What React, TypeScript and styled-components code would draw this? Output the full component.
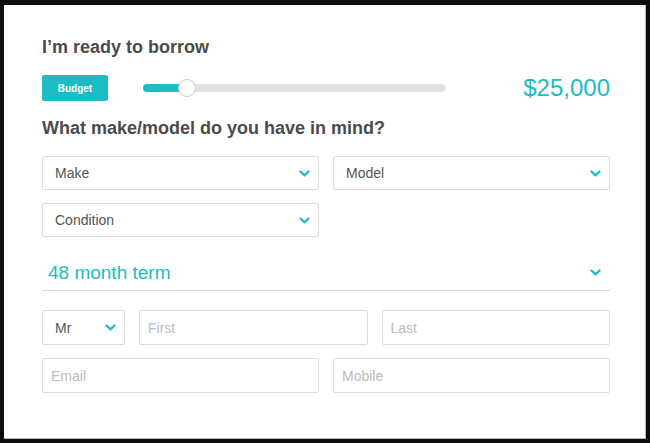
import React from "react";
import styled, { createGlobalStyle } from "styled-components";

const TEAL = "#1bbcc2";

const Global = createGlobalStyle`
  html, body { margin: 0; padding: 0; background: #0e0e0e; }
  body { font-family: "Liberation Sans", Arial, sans-serif; }
  * { box-sizing: border-box; }
`;

const Card = styled.div`
  margin: 5px 4px 4px 4px;
  height: 434px;
  background: #fff;
  border-right: 1px solid #b8b8b8;
  border-bottom: 1px solid #b8b8b8;
  padding: 31px 35px 0 38px;
  display: flex;
  flex-direction: column;
`;

const Heading = styled.h2<{ $mt?: number }>`
  margin: ${(p) => p.$mt ?? 0}px 0 0 0;
  font-size: 18px;
  line-height: 22px;
  font-weight: 700;
  color: #4b4b4b;
`;

const BudgetRow = styled.div`
  margin-top: 17px;
  display: flex;
  align-items: center;
  height: 26px;
`;

const BudgetButton = styled.button`
  width: 66px;
  height: 26px;
  border: none;
  border-radius: 2px;
  background: ${TEAL};
  color: #fff;
  font-family: "Liberation Sans", Arial, sans-serif;
  font-size: 10px;
  font-weight: 700;
  padding: 0;
`;

const Track = styled.div`
  position: relative;
  margin-left: 35px;
  width: 303px;
  height: 8px;
  border-radius: 4px;
  background: #e2e2e2;
`;

const Fill = styled.div`
  position: absolute;
  left: 0;
  top: 0;
  height: 8px;
  border-radius: 4px;
  background: ${TEAL};
`;

const Thumb = styled.div`
  position: absolute;
  top: 50%;
  width: 18px;
  height: 18px;
  margin: -9px 0 0 -9px;
  border-radius: 50%;
  background: #fff;
  border: 1px solid #c9c9c9;
`;

const Amount = styled.div`
  margin-left: auto;
  color: ${TEAL};
  font-size: 24px;
  line-height: 26px;
`;

const Row = styled.div<{ $cols: string; $mt: number; $h: number }>`
  margin-top: ${(p) => p.$mt}px;
  display: grid;
  grid-template-columns: ${(p) => p.$cols};
  column-gap: 14px;
  height: ${(p) => p.$h}px;
`;

const SelectBox = styled.div<{ $pl?: number }>`
  display: flex;
  align-items: center;
  justify-content: space-between;
  height: 100%;
  border: 1px solid #dcdcdc;
  border-radius: 2px;
  padding: 0 8px 0 ${(p) => p.$pl ?? 12}px;
  font-size: 14px;
  color: #555;
`;

const InputBox = styled.div`
  display: flex;
  align-items: center;
  height: 100%;
  border: 1px solid #dcdcdc;
  border-radius: 2px;
  padding: 0 8px;
  font-size: 14px;
  color: #bcbcbc;
`;

const TermBox = styled.div`
  margin-top: 18px;
  height: 36px;
  display: flex;
  align-items: center;
  justify-content: space-between;
  border-bottom: 1px solid #dcdcdc;
  padding: 0 9px 0 6px;
  font-size: 19px;
  color: ${TEAL};
`;

const Chevron = () => (
  <svg width="11" height="7" viewBox="0 0 11 7">
    <path
      d="M1.5 1.5 L5.5 5.3 L9.5 1.5"
      fill="none"
      stroke={TEAL}
      strokeWidth="2.3"
      strokeLinecap="round"
      strokeLinejoin="round"
    />
  </svg>
);

const Select = ({ label, pl }: { label: string; pl?: number }) => (
  <SelectBox $pl={pl}>
    <span>{label}</span>
    <Chevron />
  </SelectBox>
);

export default function App() {
  const pct = 14.5;
  return (
    <>
      <Global />
      <Card>
        <Heading>I’m ready to borrow</Heading>
        <BudgetRow>
          <BudgetButton>Budget</BudgetButton>
          <Track>
            <Fill style={{ width: `${pct}%` }} />
            <Thumb style={{ left: `${pct}%` }} />
          </Track>
          <Amount>$25,000</Amount>
        </BudgetRow>
        <Heading $mt={16}>What make/model do you have in mind?</Heading>
        <Row $cols="1fr 1fr" $mt={17} $h={34}>
          <Select label="Make" />
          <Select label="Model" />
        </Row>
        <Row $cols="1fr 1fr" $mt={13} $h={34}>
          <Select label="Condition" />
        </Row>
        <TermBox>
          <span>48 month term</span>
          <Chevron />
        </TermBox>
        <Row $cols="83px 1fr 1fr" $mt={19} $h={35}>
          <Select label="Mr" />
          <InputBox>First</InputBox>
          <InputBox>Last</InputBox>
        </Row>
        <Row $cols="1fr 1fr" $mt={13} $h={35}>
          <InputBox>Email</InputBox>
          <InputBox>Mobile</InputBox>
        </Row>
      </Card>
    </>
  );
}
